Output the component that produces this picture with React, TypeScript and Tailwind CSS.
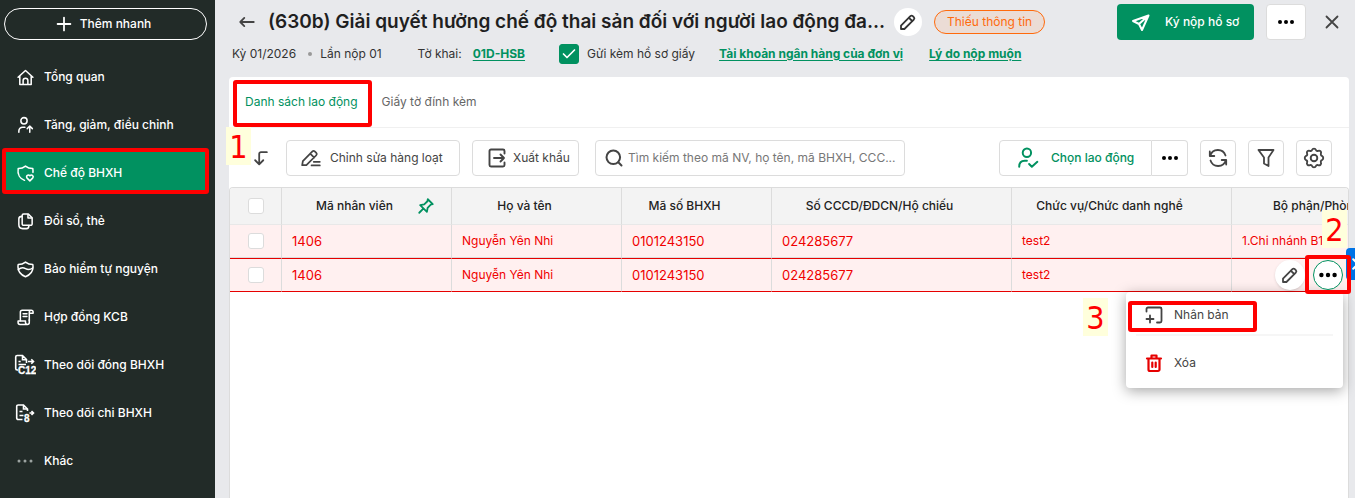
import { useState } from "react";
import type { ReactNode } from "react";
import { clsx } from "clsx";

type IconProps = {
  children: ReactNode;
  className?: string;
  width?: number;
};

const Icon = ({ children, className = "size-5", width = 1.6 }: IconProps) => (
  <svg
    viewBox="0 0 20 20"
    fill="none"
    stroke="currentColor"
    strokeWidth={width}
    strokeLinecap="round"
    strokeLinejoin="round"
    className={clsx("shrink-0", className)}
    aria-hidden="true"
  >
    {children}
  </svg>
);

const Dots = ({ className = "size-5", r = 2 }: { className?: string; r?: number }) => (
  <svg viewBox="0 0 20 20" fill="currentColor" className={clsx("shrink-0", className)} aria-hidden="true">
    <circle cx="4" cy="10" r={r} />
    <circle cx="10" cy="10" r={r} />
    <circle cx="16" cy="10" r={r} />
  </svg>
);

const Pencil = () => (
  <Icon width={1.8}>
    <path d="M3 17v-3.400L12.400 4.200a1.700 1.700 0 0 1 2.400 0l1 1a1.700 1.700 0 0 1 0 2.400L6.400 17z" />
    <path d="M11 5.800l3.200 3.200" />
  </Icon>
);

const menuItems = [
  {
    label: "Tổng quan",
    icon: (
      <Icon className="size-[19px]">
        <path d="M2.200 9.800L10 2.600l7.800 7.200M4 8.400V17.400h12V8.400" />
        <path d="M7.500 17.200v-4a2.500 2.500 0 0 1 5 0v4" />
      </Icon>
    ),
  },
  {
    label: "Tăng, giảm, điều chỉnh",
    icon: (
      <Icon className="size-[19px]">
        <circle cx="8.400" cy="5" r="3.300" />
        <path d="M3 17v-1.200a4 4 0 0 1 4-4h2.400M14.500 17v-6M11.800 13.300l2.700-2.700 2.700 2.700" />
      </Icon>
    ),
  },
  {
    label: "Chế độ BHXH",
    icon: (
      <Icon className="size-[19px]">
        <path d="M9 17.200C4.500 15.500 1.200 11 2.300 4.800 5.300 4.900 7.800 4 10 2.200c2.200 1.800 4.700 2.700 7.700 2.600.2 1.300.3 2.600.1 4" />
        <path d="M14.600 17.800l-2.900-2.900a1.900 1.900 0 0 1 2.700-2.700l.2.200.2-.2a1.900 1.900 0 0 1 2.700 2.700z" />
      </Icon>
    ),
  },
  {
    label: "Đổi sổ, thẻ",
    icon: (
      <Icon className="size-[19px]">
        <path d="M8 2.200h5L17 6v6.500a1.500 1.500 0 0 1-1.500 1.500H8a1.500 1.500 0 0 1-1.500-1.500V3.700A1.500 1.500 0 0 1 8 2.200z" />
        <path d="M12.600 2.600V6.400h3.800M6.300 4.600C4 4.600 3 5.400 3 7v6.500C3 16 4.500 17.500 7 17.500h4c1.700 0 2.600-1 2.600-3.300" />
      </Icon>
    ),
  },
  {
    label: "Bảo hiểm tự nguyện",
    icon: (
      <Icon className="size-[19px]">
        <path d="M10 2.200c2.200 1.800 4.700 2.600 7.700 2.600 1 6-2 10.500-7.700 12.800C4.300 15.300 1.300 10.800 2.300 4.800 5.300 4.800 7.800 4 10 2.200z" />
        <path d="M2.400 10.300C5 7.800 7.600 7.700 10 9.100s5 1.300 7.600-.7" />
      </Icon>
    ),
  },
  {
    label: "Hợp đồng KCB",
    icon: (
      <Icon className="size-[19px]">
        <path d="M14 13.500V4.300a2 2 0 0 1 4 0v1.200h-4M16 2.300H6.600a2 2 0 0 0-2 2v9.200" />
        <path d="M12 17.300H4.200a2 2 0 0 1-2-2v-1.700H10v1.700a2 2 0 0 0 4 0v-3M7.500 6h4M7.500 9h4" />
      </Icon>
    ),
  },
  {
    label: "Theo dõi đóng BHXH",
    icon: (
      <svg viewBox="0 0 22 22" fill="none" stroke="currentColor" strokeWidth="1.600" className="size-[22px] shrink-0">
        <path d="M4 16H3.200A1.500 1.500 0 0 1 1.700 14.500V3A1.500 1.500 0 0 1 3.200 1.500H8.500l4 4v3.500M8.500 1.500v4.200h4M4.500 7.500H6.700M4.500 10.500H12M14 7.500h5.500M17.300 5.300l2.200 2.200-2.200 2.200" />
        <text x="4" y="20" fontSize="10" fontWeight="700" fontFamily="Liberation Sans" stroke="currentColor" strokeWidth="0.3" fill="currentColor">
          C12
        </text>
      </svg>
    ),
  },
  {
    label: "Theo dõi chi BHXH",
    icon: (
      <svg viewBox="0 0 22 22" fill="none" stroke="currentColor" strokeWidth="1.600" className="size-[22px] shrink-0">
        <path d="M8.500 17.500H4.200A1.500 1.500 0 0 1 2.700 16V4.500A1.500 1.500 0 0 1 4.200 3H9.500l4 4v2M9.500 3v4h4M5.500 9.500h3M5.500 13.500h4M15.500 11h4M17.500 9l2 2-2 2" />
        <text x="10" y="19.500" fontSize="10" fontWeight="700" fontFamily="Liberation Sans" stroke="currentColor" strokeWidth="0.3" fill="currentColor">
          8
        </text>
      </svg>
    ),
  },
  { label: "Khác", icon: <Dots className="size-5 text-[#9ca3a1]" r={1.5} /> },
];

const columns = [
  { label: "Mã nhân viên", width: "w-[170px]", pinned: true, numeric: true },
  { label: "Họ và tên", width: "w-[170px]" },
  { label: "Mã số BHXH", width: "w-[150px]", numeric: true },
  { label: "Số CCCD/ĐDCN/Hộ chiếu", width: "w-[240px]", numeric: true },
  { label: "Chức vụ/Chức danh nghề", width: "w-[220px]" },
  { label: "Bộ phận/Phòng ban", width: "w-[220px]" },
];

const rows = [
  { id: 1, cells: ["1406", "Nguyễn Yên Nhi", "0101243150", "024285677", "test2", "1.Chi nhánh B1"] },
  { id: 2, cells: ["1406", "Nguyễn Yên Nhi", "0101243150", "024285677", "test2", ""] },
];

const checkboxClass = "block size-4 appearance-none rounded-[3px] border border-[#dcdcdc] bg-white checked:bg-[#019160]";
const toolButton = "flex h-9 items-center rounded border border-[#dcdcdc] bg-white text-[#444]";
const linkClass = "font-bold text-[#019160] underline underline-offset-2";

// red rectangle of the guide, it has to be placed in a relative parent
const Frame = ({ className }: { className: string }) => (
  <span className={clsx("pointer-events-none absolute rounded-[3px] border-4 border-[#ff0000]", className)} />
);

const StepNumber = ({ value, className }: { value: number; className: string }) => (
  <span
    className={clsx(
      "pointer-events-none absolute flex h-[38px] w-[25px] items-center justify-center bg-[#ffffdc] pt-0.5 font-['DejaVu_Sans_Condensed','DejaVu_Sans',sans-serif] text-[32px] leading-none text-[#ff0000]",
      className
    )}
  >
    {value}
  </span>
);

const Sidebar = () => {
  const [active, setActive] = useState("Chế độ BHXH");

  return (
    <aside className="w-[215px] shrink-0 bg-[#222b28] pt-2 text-white">
      <button className="mr-2 ml-1 flex h-8 w-[203px] items-center justify-center gap-2 rounded-full border border-white pr-1 font-medium">
        <Icon className="size-4" width={2.2}>
          <path d="M10 2v16M2 10h16" />
        </Icon>
        Thêm nhanh
      </button>
      <nav className="mt-[11px]">
        {menuItems.map((item) => (
          <div key={item.label} className="relative py-[5px] pr-2.5 pl-1.5">
            <button
              onClick={() => setActive(item.label)}
              className={clsx(
                "flex h-[38px] w-full items-center gap-2 pt-1 pl-2 font-medium",
                active === item.label && "bg-[#019160]"
              )}
            >
              <span className="flex w-[22px] justify-center">{item.icon}</span>
              {item.label}
            </button>
            {item.label === "Chế độ BHXH" && <Frame className="inset-y-px right-1.5 left-0.5" />}
          </div>
        ))}
      </nav>
    </aside>
  );
};

const Header = () => (
  <header className="h-[77px] pl-px">
    <div className="flex h-11 items-center pl-2">
      <button aria-label="Quay lại" className="mr-3 text-[#444]">
        <Icon className="size-[18px]" width={2}>
          <path d="M2.500 10h15M7 5.500L2.500 10 7 14.500" />
        </Icon>
      </button>
      <h1 className="w-[622px] truncate text-[19px] leading-7 font-semibold text-[#1f1f1f]">
        (630b) Giải quyết hưởng chế độ thai sản đối với người lao động đa...
      </h1>
      <button aria-label="Sửa tên" className="ml-1 flex size-7 shrink-0 items-center justify-center rounded-full bg-white text-[#333]">
        <Pencil />
      </button>
      <span className="ml-3 flex h-6 shrink-0 items-center rounded-full border border-[#ff6a0c] bg-[#ebdcd5] px-3 text-[#ff6a0c]">
        Thiếu thông tin
      </span>
      <button className="ml-auto flex h-9 w-[137px] shrink-0 items-center gap-3.5 rounded bg-[#019160] pl-3.5 font-medium text-white">
        <Icon width={2}>
          <path d="M17.500 3.500L2 9l6 3 3 6zM17.500 3.500L8 12" />
        </Icon>
        Ký nộp hồ sơ
      </button>
      <button aria-label="Thêm thao tác" className="ml-3 flex h-9 w-10 shrink-0 items-center justify-center rounded border border-[#dcdcdc] bg-white text-black">
        <Dots className="size-5" />
      </button>
      <button aria-label="Đóng" className="mr-[7px] ml-4 text-[#444]">
        <Icon width={1.8}>
          <path d="M4.500 4.500l11 11M15.500 4.500l-11 11" />
        </Icon>
      </button>
    </div>
    <div className="flex h-5 items-center pl-0.5">
      <span>Kỳ 01/2026</span>
      <span className="mr-2 ml-3 size-1 rounded-full bg-[#999]" />
      <span>Lần nộp 01</span>
      <span className="ml-9">Tờ khai:</span>
      <a href="#to-khai" className={clsx("ml-[11px]", linkClass)}>
        01D-HSB
      </a>
      <label className="ml-[34px] flex items-center gap-2">
        <span className="relative">
          <input type="checkbox" defaultChecked className="peer block size-5 appearance-none rounded-[3px] border border-[#019160] bg-white checked:bg-[#019160]" />
          <Icon className="pointer-events-none absolute inset-0 size-5 text-white" width={1.7}>
            <path d="M4.500 10l3.500 3.500 7.500-7.500" />
          </Icon>
        </span>
        Gửi kèm hồ sơ giấy
      </label>
      <a href="#tai-khoan" className={clsx("ml-6", linkClass)}>
        Tài khoản ngân hàng của đơn vị
      </a>
      <a href="#ly-do" className={clsx("ml-[26px]", linkClass)}>
        Lý do nộp muộn
      </a>
    </div>
  </header>
);

const Toolbar = () => (
  <div className="relative flex h-[59px] items-center pr-[17px] pl-[23px]">
    <StepNumber value={1} className="-top-px -left-[3px]" />
    <Icon className="size-[18px] text-[#444]" width={2}>
      <path d="M16.500 3.500H10a2 2 0 0 0-2 2V16.500M3.500 12.500L8 17l4.500-4.500" />
    </Icon>
    <button className={clsx(toolButton, "ml-4 w-[174px] shrink-0 gap-2 pl-[13px]")}>
      <Icon className="size-[22px]">
        <path d="M2 16.500l.6-3.700L11.300 4a1.500 1.500 0 0 1 2.100 0l1.400 1.400a1.500 1.500 0 0 1 0 2.100L5.800 16.400zM9.300 6l3.600 3.600M12.500 13.500h5.500M10.500 16.800h7.500" />
      </Icon>
      Chỉnh sửa hàng loạt
    </button>
    <button className={clsx(toolButton, "ml-3 w-[107px] shrink-0 gap-1.5 pl-3.5")}>
      <Icon className="size-5" width={1.9}>
        <path d="M2.500 5V3a1.500 1.500 0 0 1 1.500-1.500h12A1.500 1.500 0 0 1 17.500 3v2.500M2.500 5v12A1.500 1.500 0 0 0 4 18.500h12a1.500 1.500 0 0 0 1.500-1.500v-2.500M7 10h10M13.500 6.500L17 10l-3.500 3.500" />
      </Icon>
      Xuất khẩu
    </button>
    <label className={clsx(toolButton, "ml-4 w-[310px] gap-1 pr-2 pl-2")}>
      <Icon width={2}>
        <circle cx="9.300" cy="9.300" r="6.800" />
        <path d="M14.300 14.300l3.200 3.200" />
      </Icon>
      <input
        type="text"
        aria-label="Tìm kiếm"
        placeholder="Tìm kiếm theo mã NV, họ tên, mã BHXH, CCC..."
        className="min-w-0 flex-1 outline-none placeholder:text-[#777] placeholder-shown:text-ellipsis"
      />
    </label>
    <div className="ml-auto flex shrink-0 gap-3">
      <div className="flex">
        <button className="flex h-9 w-[153px] items-center gap-3 rounded-l border border-[#dcdcdc] pl-[17px] font-medium text-[#019160]">
          <Icon className="size-[22px]" width={1.8}>
            <circle cx="9" cy="5.200" r="3.800" />
            <path d="M2 18c0-3.500 2-5.500 5-5.500h2M11 15.500l2.500 2.500 5-4.500" />
          </Icon>
          Chọn lao động
        </button>
        <button aria-label="Tùy chọn" className="flex h-9 w-9 items-center justify-center rounded-r border border-l-0 border-[#dcdcdc] text-black">
          <Dots className="size-5" />
        </button>
      </div>
      <button aria-label="Tải lại" className={clsx(toolButton, "w-9 justify-center")}>
        <Icon className="size-5" width={1.8}>
          <path d="M1.800 3.500v4.500h4.500M2.200 7.800A8 8 0 0 1 17.500 7.500M18.200 16.500V12h-4.500M17.800 12.200A8 8 0 0 1 2.500 12.500" />
        </Icon>
      </button>
      <button aria-label="Lọc" className={clsx(toolButton, "w-9 justify-center")}>
        <Icon className="size-5" width={1.8}>
          <path d="M2.500 2h15L12.500 9.500V18l-4.500-2.500V9.500z" />
        </Icon>
      </button>
      <button aria-label="Thiết lập" className={clsx(toolButton, "w-9 justify-center")}>
        <Icon className="size-[22px]" width={1.7}>
          <path d="M10 1.500c.8 0 1.500.4 1.800 1.200.3.800 1.200 1.200 2 .8 1.600-.7 3.200.9 2.500 2.500-.3.900 0 1.800.9 2.100 1.600.700 1.600 3.100 0 3.800-.900.300-1.200 1.200-.900 2.100.700 1.600-.900 3.200-2.500 2.500-.800-.400-1.700 0-2 .8-.600 1.700-3 1.700-3.600 0-.300-.800-1.200-1.200-2-.8-1.600.700-3.200-.900-2.500-2.500.300-.900 0-1.800-.900-2.100-1.600-.700-1.600-3.100 0-3.800.900-.300 1.200-1.200.900-2.100C3 4.400 4.600 2.800 6.200 3.500c.8.400 1.700 0 2-.8.300-.800 1-1.200 1.800-1.200z" />
          <circle cx="10" cy="10" r="3" />
        </Icon>
      </button>
    </div>
  </div>
);

const RowMenu = () => (
  <div className="absolute top-[105px] right-1.5 w-[217px] rounded bg-white pt-0.5 text-[#444] shadow-[0_3px_14px_rgba(0,0,0,0.35)]">
    <button className="flex h-10 w-full items-center gap-2.5 pt-0.5 pl-[18px]">
      <Icon className="size-5" width={1.8}>
        <path d="M2.500 6.500V4a1.500 1.500 0 0 1 1.500-1.500h12A1.500 1.500 0 0 1 17.500 4v12a1.500 1.500 0 0 1-1.500 1.500h-3M6 10.500v7M2.500 14h7" />
      </Icon>
      Nhân bản
    </button>
    <Frame className="top-[9px] left-0.5 h-[31px] w-[129px]" />
    <hr className="mx-2.5 border-t-2 border-[#f6f6f6]" />
    <button className="flex h-[52px] w-full items-center gap-2.5 pt-0.5 pl-[18px]">
      <Icon className="size-5 text-[#e60000]" width={2.2}>
        <path d="M3 5.500h14M7.500 5V2.500h5V5M4.500 6v10.500A1.500 1.500 0 0 0 6 18h8a1.500 1.500 0 0 0 1.500-1.500V6M8.300 9.500v4.500M11.700 9.500v4.500" />
      </Icon>
      Xóa
    </button>
    <StepNumber value={3} className="top-[6px] -left-[43px]" />
  </div>
);

const EmployeeTable = () => (
  <div className="relative flex-1">
    <div className="h-full overflow-hidden rounded-t border-x border-t border-[#dcdcdc]">
      <table className="w-[1222px] table-fixed border-separate border-spacing-0">
        <thead>
          <tr className="h-[37px] bg-[#f3f3f3] text-[#222]">
            <th className="w-[52px] border-r border-b border-[#dcdcdc] border-b-[#e8e8e8] pl-[18px]">
              <input type="checkbox" aria-label="Chọn tất cả" className={checkboxClass} />
            </th>
            {columns.map((col) => (
              <th key={col.label} className={clsx("border-r border-b border-[#dcdcdc] border-b-[#e8e8e8] p-0 font-medium", col.width)}>
                <div className="flex items-center pr-3.5 pl-2.5">
                  <span className="flex-1 text-center">{col.label}</span>
                  <span className="w-5 text-[#019160]">
                    {col.pinned && (
                      <Icon className="size-[18px]" width={2}>
                        <path d="M12 2.500l5.500 5.500-2.200.4-3.500 3.600-.8 4.500L3.500 9l4.500-.8L11.600 4.700zM7 13l-4.500 4.500" />
                      </Icon>
                    )}
                  </span>
                </div>
              </th>
            ))}
          </tr>
        </thead>
        <tbody>
          {rows.map((row) => {
            const selected = row.id === 2;
            const line = selected ? "h-[34px] border-y border-y-[#e60000]" : "h-[33px] border-b border-b-[#dcdcdc]";
            return (
              <tr key={row.id} className="bg-[#fff0f0] text-[#f00000]">
                <td className={clsx("border-r border-r-[#dcdcdc] py-0 pr-0 pl-[18px]", line)}>
                  <input type="checkbox" aria-label={`Chọn dòng ${row.id}`} className={checkboxClass} />
                </td>
                {row.cells.map((cell, i) => (
                  <td key={i} className={clsx("border-r border-r-[#dcdcdc] px-2.5 py-0", line, columns[i].numeric && "text-[13px]")}>
                    {cell}
                  </td>
                ))}
              </tr>
            );
          })}
        </tbody>
      </table>
    </div>
    <StepNumber value={2} className="top-[23px] right-0.5" />
    <button aria-label="Mở rộng" className="absolute top-[61px] -right-[21px] flex h-8 w-6 items-center rounded bg-[#0073e6] pl-1 text-white">
      <Icon className="size-4" width={2.5}>
        <path d="M4 4l6 6-6 6" />
      </Icon>
    </button>
    <RowMenu />
    <div className="absolute top-[73px] right-1.5 flex gap-2">
      <button aria-label="Sửa" className="flex size-[30px] items-center justify-center rounded-full bg-white text-[#444] shadow">
        <Pencil />
      </button>
      <button aria-label="Thao tác khác" className="relative flex size-[30px] items-center justify-center rounded-full border border-[#019160] bg-white text-black">
        <Dots className="size-[22px]" />
        <Frame className="-inset-x-[9px] -top-[6px] -bottom-[5px]" />
      </button>
    </div>
  </div>
);

const App = () => {
  return (
    <div className="flex min-h-screen overflow-hidden bg-[#e8e9ec] font-[Inter,sans-serif] text-xs leading-5 text-[#333]">
      <Sidebar />
      <main className="flex min-w-0 flex-1 flex-col pr-1.5 pl-3.5">
        <Header />
        <section className="flex flex-1 flex-col rounded-t bg-white">
          <div className="flex h-[51px] gap-6 border-b border-[#f0f0f0] pl-4">
            <button className="relative text-[#019160]">
              Danh sách lao động
              <Frame className="top-[3px] -right-3.5 bottom-0 -left-3" />
            </button>
            <button className="text-[#666]">Giấy tờ đính kèm</button>
          </div>
          <Toolbar />
          <EmployeeTable />
        </section>
      </main>
    </div>
  );
};

export default App;
